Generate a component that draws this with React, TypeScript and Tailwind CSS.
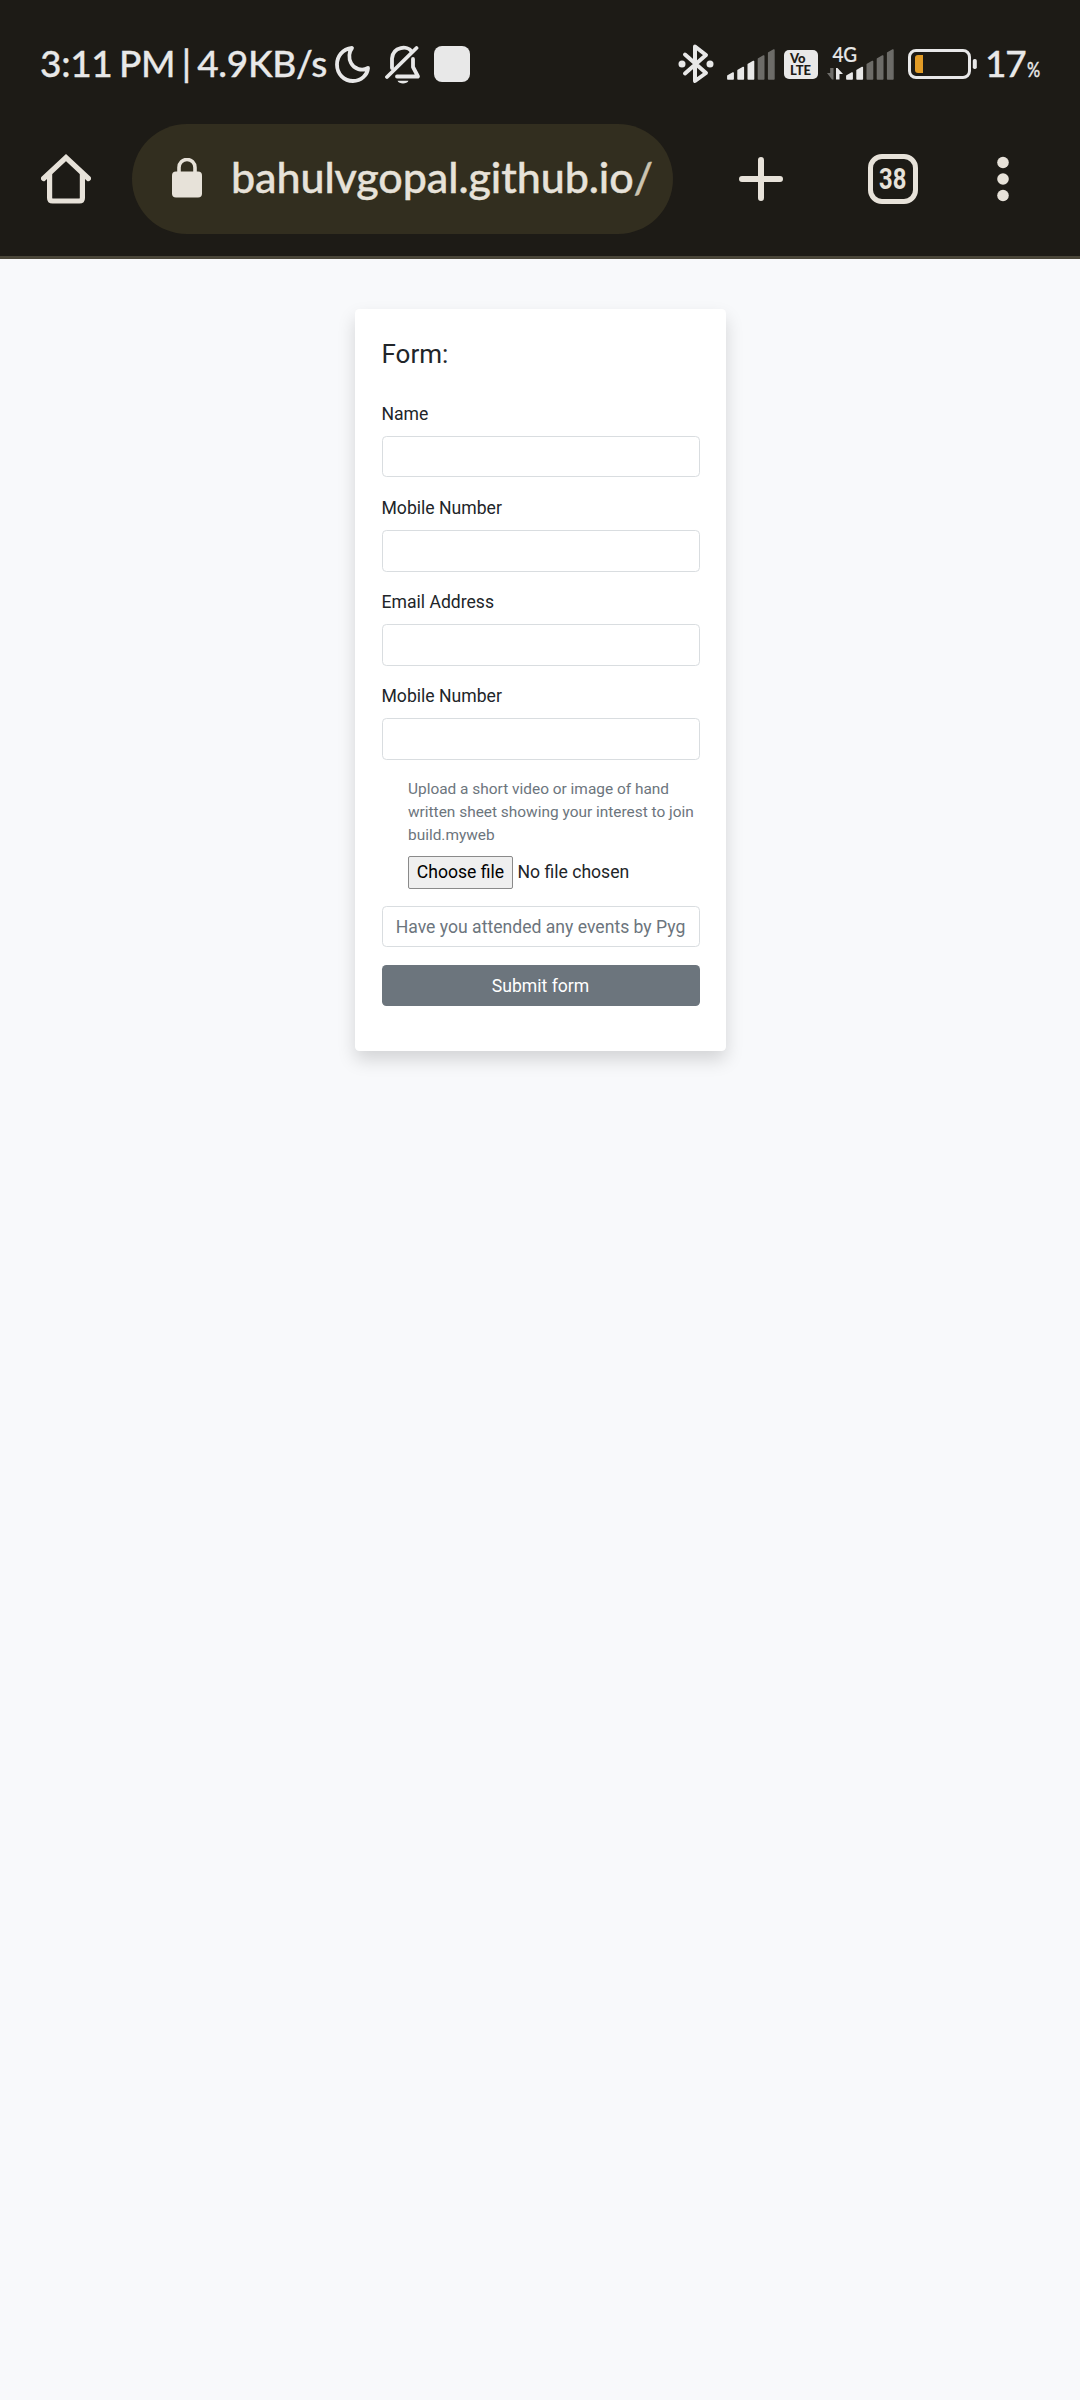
function Bars({ x, lit }: { x: number; lit: number }) {
  const tops = [25, 19.5, 13.5, 8, 2];
  return (
    <g strokeLinejoin="round" strokeWidth="1.6">
      {tops.map((t, i) => {
        const l = x + i * 10.2 + 0.9;
        const c = i < lit ? '#e8e8e8' : '#6d6c68';
        return <path key={i} d={`M${l} ${t + 3}L${l + 5.2} ${t}V31H${l}Z`} fill={c} stroke={c} />;
      })}
    </g>
  );
}

function StatusBar() {
  return (
    <div className="flex h-[124px] items-start pl-[40px] pt-[42px] text-[#e8e8e8]">
      <div className="-mt-[1px] flex h-[44px] w-[295px] items-center whitespace-nowrap font-['Lato','Open_Sans',sans-serif] text-[37px] font-medium leading-[44px] tracking-[-0.3px] [-webkit-text-stroke:0.3px_currentColor] [word-spacing:-2.6px]">
        3:11 PM | 4.9KB/s
      </div>
      <svg className="mt-[3px] h-[38px] w-[36px] shrink-0" viewBox="0 0 36 38" fill="none" stroke="currentColor" strokeWidth="3.8" strokeLinejoin="round">
        <path d="M17 3C7 4 2 12 2 19.5C2 29 9 36 18 36C26 36 32.500 30 33 23C27 26.500 19 24 16 18C13.500 13 14 7 17 3Z" />
      </svg>
      <svg className="ml-[14px] mt-[3px] h-[40px] w-[36px] shrink-0" viewBox="0 0 36 40" fill="none" stroke="currentColor" strokeWidth="3.8" strokeLinecap="round" strokeLinejoin="round">
        <path d="M7 23V13.500C8 1 23 .5 26.500 6.500" />
        <path d="M28 14V22L33 31.500H12" />
        <path d="M2 32L31.500 3" />
        <path d="M12.500 35.800H23.500C22 39.500 14 39.500 12.500 35.800Z" fill="currentColor" stroke="none" />
      </svg>
      <div className="ml-[13px] mt-[4px] h-[36px] w-[36px] shrink-0 rounded-[8px] bg-[#e8e8e8]" />

      <svg className="ml-[208px] mt-[2px] h-[40px] w-[36px] shrink-0" viewBox="0 0 36 40" fill="none" stroke="currentColor" strokeWidth="4" strokeLinejoin="round" strokeLinecap="round">
        <path d="M7 10.500L28 29L17 37V2.500L28 11L7 29.500" />
        <circle cx="4" cy="20" r="3.500" fill="currentColor" stroke="none" />
        <circle cx="32" cy="20" r="3.500" fill="currentColor" stroke="none" />
      </svg>
      <svg className="ml-[13px] mt-[6px] h-[34px] w-[49px] shrink-0" viewBox="0 0 49 34">
        <Bars x={0} lit={3} />
      </svg>
      <div className="ml-[8px] mt-[8px] h-[29px] w-[34px] shrink-0 rounded-[5px] bg-[#e8e8e8] pl-[6px] pt-[2px] font-['Lato','Open_Sans',sans-serif] text-[13px] font-black leading-[12px] text-[#1d1b16]">
        <div className="h-[12px] w-[20px]">Vo</div>
        <div className="h-[12px] w-[26px]">LTE</div>
      </div>
      <div className="ml-[9px] mt-[2px] h-[40px] w-[68px] shrink-0">
        <div className="h-[19px] w-[30px] origin-left scale-x-[0.9] pl-[6px] font-['Lato','Open_Sans',sans-serif] text-[21px] font-medium leading-[19px] [-webkit-text-stroke:0.2px_currentColor]">4G</div>
        <svg className="-mt-[15px] h-[34px] w-[68px]" viewBox="0 0 68 34">
          <path d="M6.500 20V31.500H5L0 25H3.200V20Z" fill="#6d6c68" />
          <path d="M9 31.500V20H10.500L16 26H12.500V31.500Z" fill="#e8e8e8" />
          <Bars x={19} lit={2} />
        </svg>
      </div>
      <svg className="ml-[13px] mt-[6px] h-[32px] w-[70px] shrink-0" viewBox="0 0 70 32">
        <rect x="1.500" y="2.500" width="60" height="27" rx="6.500" fill="none" stroke="#e8e8e8" strokeWidth="3" />
        <path d="M10 7H15V25H10Q7 25 7 22V10Q7 7 10 7Z" fill="#e29c26" />
        <rect x="64.800" y="11" width="4" height="10" rx="1.800" fill="#e8e8e8" />
      </svg>
      <div className="-mt-[1px] ml-[7px] flex h-[44px] items-baseline font-['Lato','Open_Sans',sans-serif] font-medium leading-[44px] [-webkit-text-stroke:0.3px_currentColor]">
        <span className="text-[37px] tracking-[-1.200px]">17</span>
        <span className="ml-[1px] inline-block w-[14px] origin-left scale-x-[0.78] text-[21px]">%</span>
      </div>
    </div>
  );
}

function BrowserBar() {
  return (
    <div className="flex h-[110px] items-center pl-[41px] text-[#e7e2d9]">
      <svg className="h-[50px] w-[50px] shrink-0" viewBox="0 0 50 50" fill="none" stroke="currentColor" strokeWidth="5.200" strokeLinecap="round" strokeLinejoin="miter">
        <path d="M2.600 24.500L25 3.600L47.400 24.500" />
        <path d="M8.600 20V44Q8.600 47 11.600 47H38.400Q41.400 47 41.400 44V20" />
      </svg>
      <div className="ml-[41px] flex h-[110px] w-[541px] shrink-0 items-center rounded-full bg-[#322e1f] pl-[40px]">
        <svg className="-mt-[2px] h-[40px] w-[30px] shrink-0" viewBox="0 0 30 40">
          <path d="M7 15V9.500A8 8 0 0 1 23 9.500V15" fill="none" stroke="currentColor" strokeWidth="3.600" />
          <rect x="0" y="13.500" width="30" height="26" rx="4" fill="currentColor" />
        </svg>
        <div className="ml-[29px] whitespace-nowrap pb-[4px] font-['Lato','Open_Sans',sans-serif] text-[43px] font-medium leading-[60px] tracking-[-0.08px] [-webkit-text-stroke:0.4px_currentColor]">
          bahulvgopal.github.io<span className="text-[#cbc3b0]">/</span>
        </div>
      </div>
      <svg className="ml-[66px] h-[44px] w-[44px] shrink-0" viewBox="0 0 44 44" stroke="currentColor" strokeWidth="6" strokeLinecap="round">
        <path d="M3 22H41M22 3V41" />
      </svg>
      <div className="ml-[85px] flex h-[50px] w-[50px] shrink-0 items-center justify-center rounded-[14px] border-[5.5px] border-current font-['Roboto',sans-serif] text-[29px] font-bold leading-none">
        <span className="scale-x-[0.82]">38</span>
      </div>
      <svg className="ml-[79px] h-[46px] w-[12px] shrink-0" viewBox="0 0 12 46" fill="currentColor">
        <circle cx="6" cy="6.500" r="5.800" />
        <circle cx="6" cy="23" r="5.800" />
        <circle cx="6" cy="39.500" r="5.800" />
      </svg>
    </div>
  );
}

function Field({ label }: { label: string }) {
  return (
    <label className="mb-[17.6px] block">
      <span className="mb-[8.6px] block h-[26.4px] leading-[27px]">{label}</span>
      <input className="block h-[41.5px] w-full rounded-[4.4px] border border-[#d9dde0] bg-white px-[13px] outline-none" />
    </label>
  );
}

export default function App() {
  return (
    <div className="h-[2400px] w-[1080px] overflow-hidden bg-[#f8f9fb] font-['Roboto',sans-serif] text-[#212529]">
      <header className="h-[259px] border-b-[3px] border-[#4a4639] bg-[#1d1b16]">
        <StatusBar />
        <BrowserBar />
      </header>
      <main className="mx-auto mt-[50px] h-[742px] w-[371px] rounded-[4.4px] bg-white pl-[27px] pr-[26px] pt-[29px] text-[17.6px] shadow-[0_9px_18px_rgba(0,0,0,0.15)]">
        <h1 className="mb-[31px] text-[26px] font-normal leading-[32px]">Form:</h1>
        <form onSubmit={(e) => e.preventDefault()}>
          <Field label="Name" />
          <Field label="Mobile Number" />
          <Field label="Email Address" />
          <Field label="Mobile Number" />
          <div className="px-[26.5px] pt-[0.6px]">
            <p className="w-[300px] text-[15.43px] leading-[23.1px] text-[#6c757d]">
              Upload a short video or image of hand<br />written sheet showing your interest to join<br />build.myweb
            </p>
            <div className="mt-[8.4px] flex items-center whitespace-nowrap">
              <button type="button" className="h-[33px] w-[105px] rounded-[2px] border border-[#8a8a8a] bg-[#efefef] text-black">Choose file</button>
              <span className="ml-[4.500px]">No file chosen</span>
            </div>
          </div>
          <input
            placeholder="Have you attended any events by Pygrammers"
            className="mt-[17px] block h-[41.5px] w-full rounded-[4.4px] border border-[#d9dde0] bg-white px-[13.200px] pt-[1px] outline-none placeholder:text-[#6c757d]"
          />
          <button className="mt-[17.6px] block h-[41.5px] w-full rounded-[4.4px] bg-[#6c757d] pt-[1px] text-white">Submit form</button>
        </form>
      </main>
    </div>
  );
}
